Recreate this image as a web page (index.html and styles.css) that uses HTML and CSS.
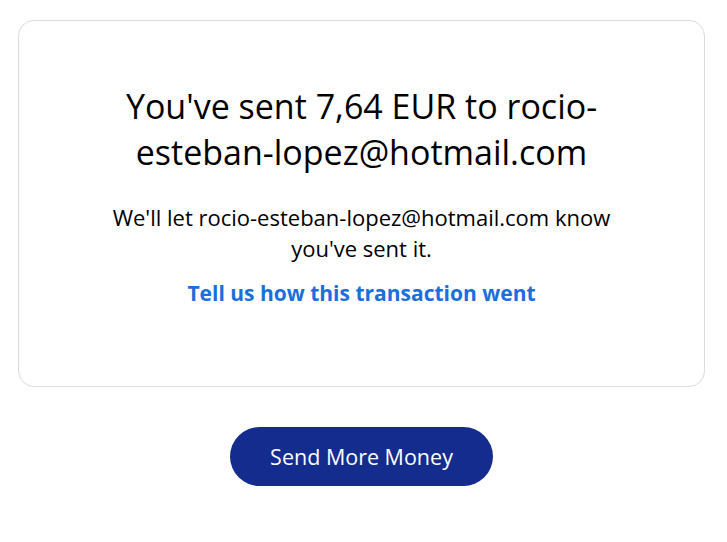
FILE: index.html
```html
<!DOCTYPE html>
<html lang="en">

<head>
    <meta charset="UTF-8" />
    <meta name="viewport" content="width=device-width, initial-scale=1.0" />
    <title>Payment sent</title>
    <link rel="stylesheet" href="styles.css">
</head>

<body>
    <div class="page">
        <div class="card">
            <h1 class="title">You've sent 7,64 EUR to rocio-esteban-lopez@hotmail.com</h1>
            <p class="note">We'll let rocio-esteban-lopez@hotmail.com know you've sent it.</p>
            <a href="#" class="feedback-link">Tell us how this transaction went</a>
        </div>

        <div class="actions">
            <button class="send-btn">Send More Money</button>
        </div>
    </div>
</body>

</html>
```

FILE: styles.css
```css
body {
    margin: 0;
    font-family: 'Open Sans', 'Noto Sans', sans-serif;
    background-color: #fff;
    color: #000;
}

.page {
    padding: 20px 22px 0 18px;
}

.card {
    border: 1px solid #dcdcdc;
    border-radius: 16px;
    height: 367px;
    box-sizing: border-box;
    padding: 62px 60px 0;
    text-align: center;
}

.title {
    margin: 0 auto;
    font-size: 34px;
    font-weight: 400;
    line-height: 46px;
    max-width: 520px;
}

.note {
    margin: 27px auto 0;
    font-size: 22px;
    line-height: 31px;
    max-width: 530px;
}

.feedback-link {
    display: inline-block;
    margin-top: 15px;
    font-size: 21px;
    font-weight: 700;
    color: #1a6fdb;
    text-decoration: none;
}

.actions {
    display: flex;
    justify-content: center;
    padding-top: 40px;
}

.send-btn {
    width: 263px;
    height: 59px;
    border: none;
    border-radius: 30px;
    background-color: #142c8e;
    color: #fff;
    font-family: inherit;
    font-size: 21.5px;
    font-weight: 500;
    cursor: pointer;
}
```
